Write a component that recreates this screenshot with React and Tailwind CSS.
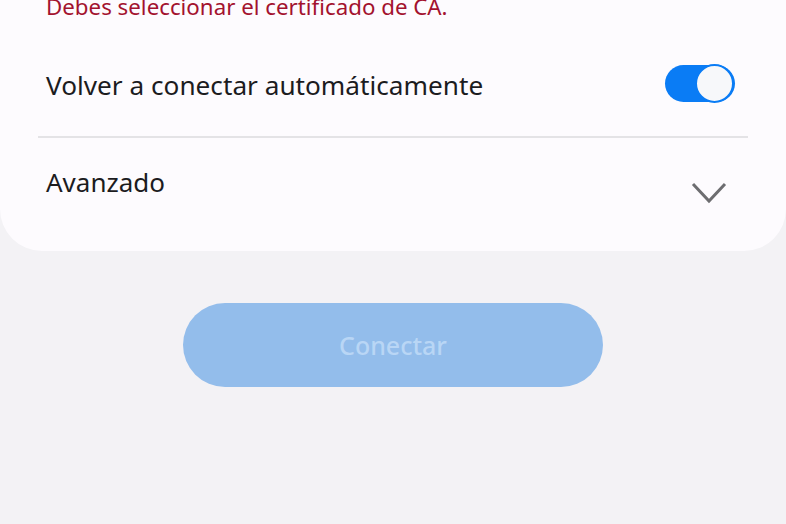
import React from "react";

export default function App() {
  return (
    <div className="w-[786px] h-[524px] overflow-hidden bg-[#f3f2f5]" style={{ fontFamily: '"Noto Sans", "Open Sans", sans-serif' }}>
      <div className="bg-[#fdfbfe] rounded-b-[42px] h-[251px] flex flex-col">
        <div className="px-[46px] -mt-[8px] text-[22.3px] leading-[30px] text-[#a3122e]">
          Debes seleccionar el certificado de CA.
        </div>
        <div className="flex items-center justify-between pl-[46px] pr-[51px] mt-[43px] h-[36px]">
          <span className="text-[26.2px] leading-[36px] text-[#1c1c1e] pt-[3px]">Volver a conectar automáticamente</span>
          <div className="relative w-[70px] h-[37px] rounded-full bg-[#0a7cf5]">
            <div className="absolute right-[1px] top-[-1px] w-[39px] h-[39px] rounded-full bg-[#f7f8fa] border-[2px] border-[#0a7cf5]" />
          </div>
        </div>
        <div className="mx-[38px] mt-[35px] h-[2px] bg-[#e4e3e6]" />
        <div className="flex items-start justify-between pl-[46px] pr-[59px] mt-[27px]">
          <span className="text-[26px] leading-[34px] text-[#1c1c1e]">Avanzado</span>
          <svg width="36" height="22" viewBox="0 0 36 22" className="mt-[17px]">
            <polyline points="2,2 18,19 34,2" fill="none" stroke="#6d6d70" strokeWidth="3" />
          </svg>
        </div>
      </div>
      <div className="flex justify-center mt-[52px]">
        <div className="w-[420px] h-[84px] rounded-full bg-[#93bdeb] flex items-center justify-center pt-[2px]">
          <span className="text-[25px] font-medium text-[#b9d6f5]">Conectar</span>
        </div>
      </div>
    </div>
  );
}
